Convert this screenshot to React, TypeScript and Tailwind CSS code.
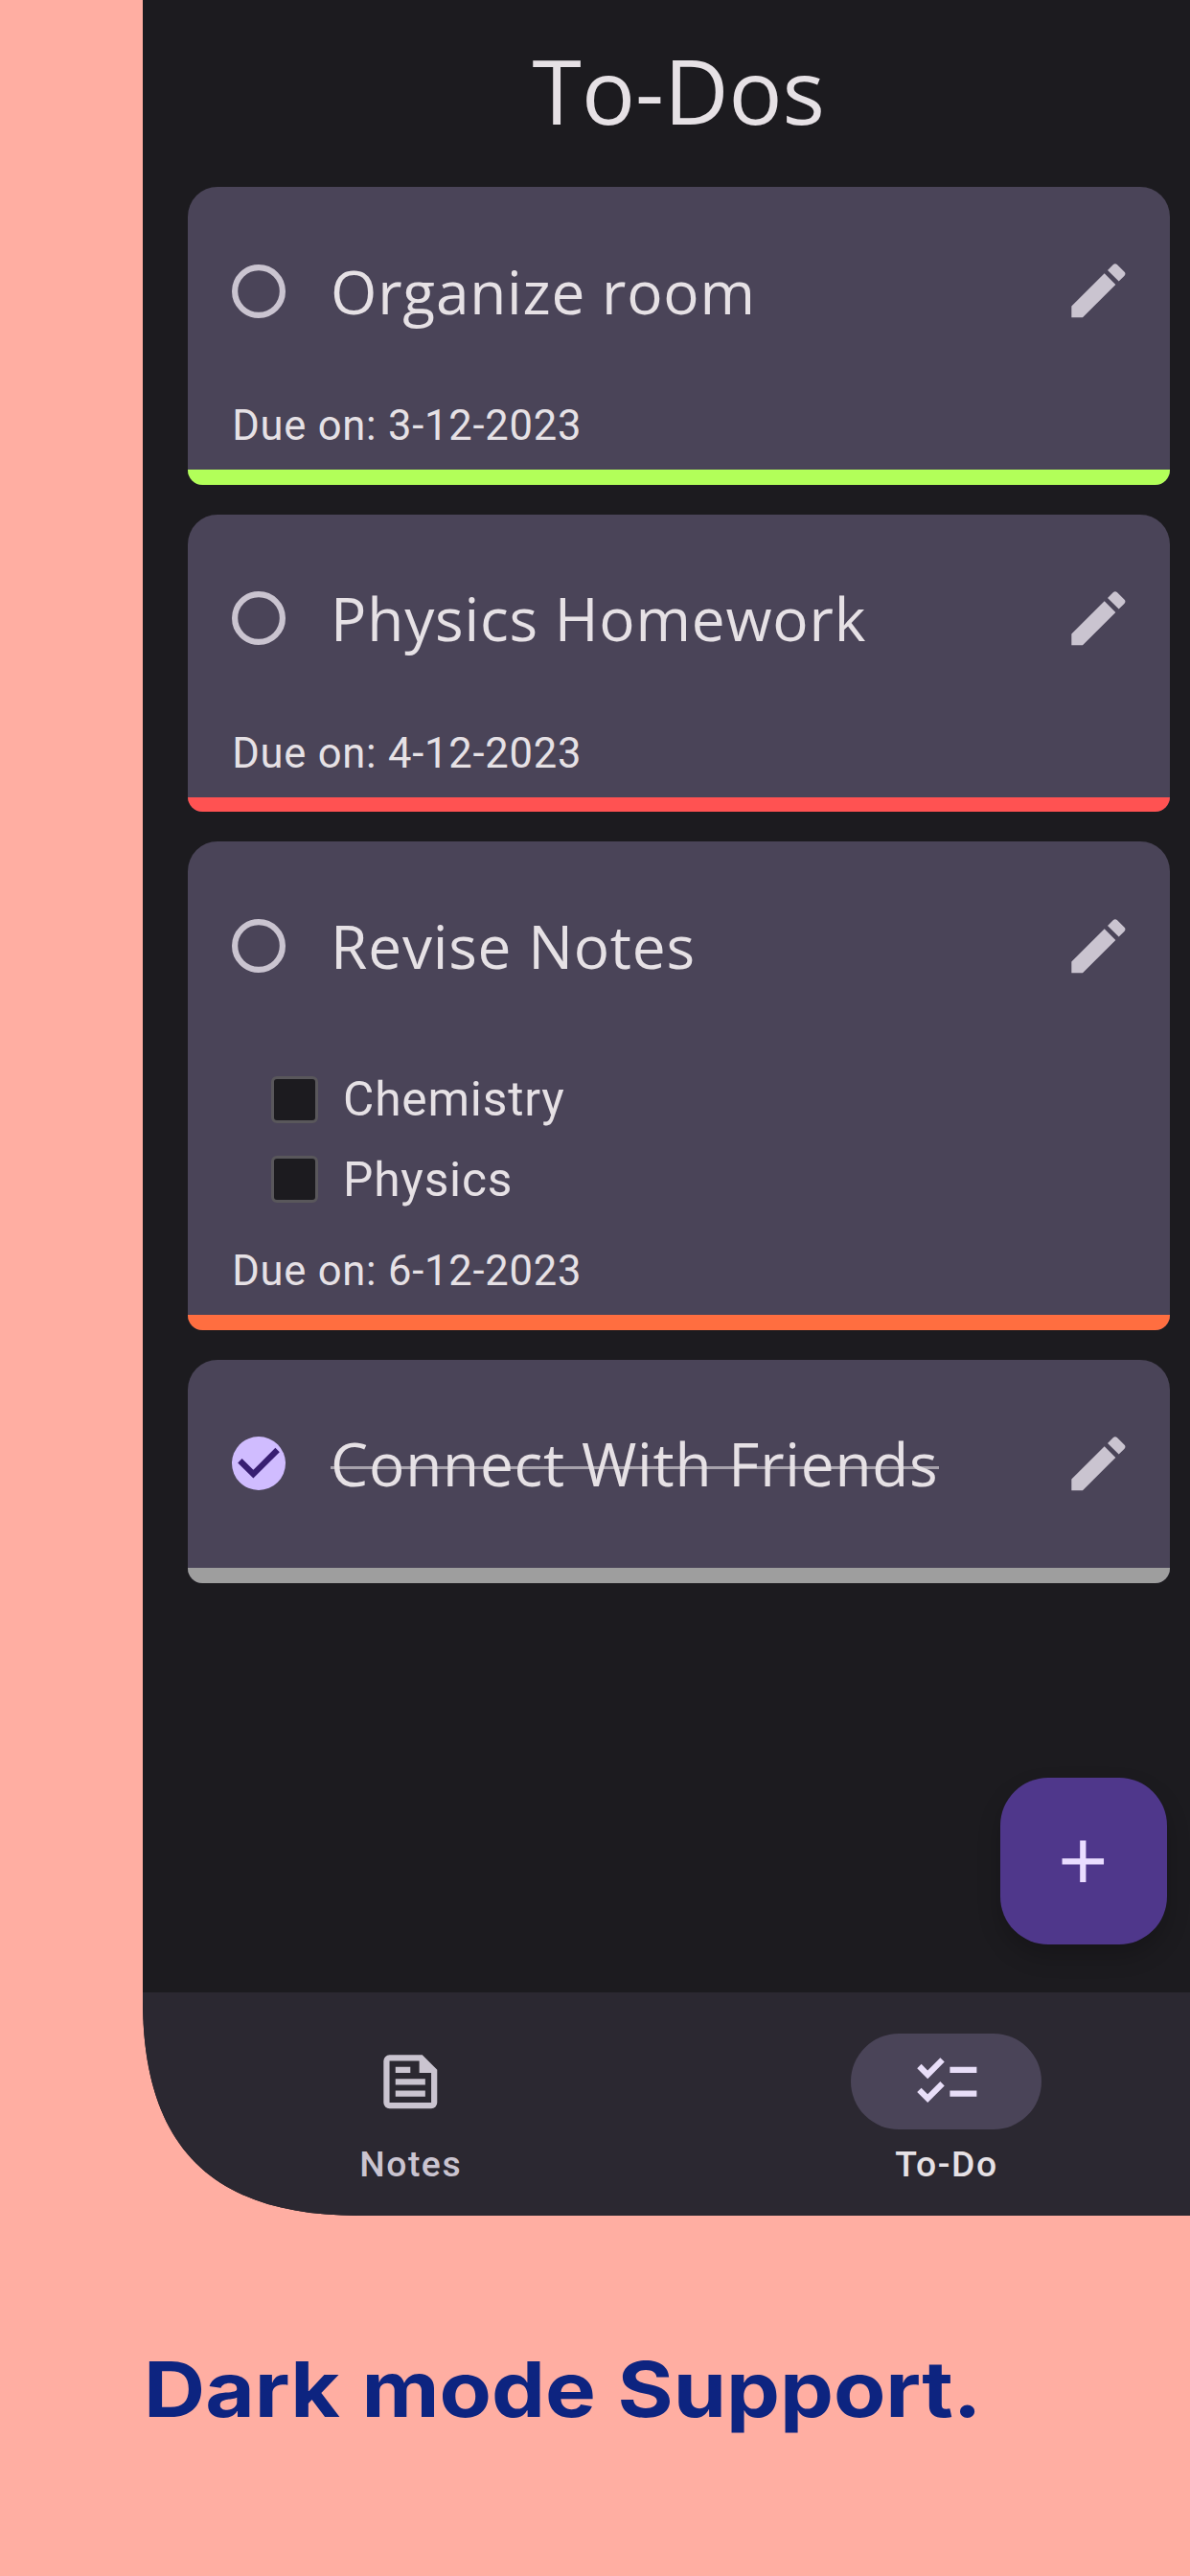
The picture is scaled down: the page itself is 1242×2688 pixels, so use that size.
type Todo = {
  title: string;
  due?: string;
  done?: boolean;
  items?: string[];
  height: string;
  accent: string;
};

const todos: Todo[] = [
  { title: 'Organize room', due: '3-12-2023', height: 'h-[310.7px]', accent: 'bg-[#B2FF59]' },
  { title: 'Physics Homework', due: '4-12-2023', height: 'h-[310.7px]', accent: 'bg-[#FF5252]' },
  { title: 'Revise Notes', due: '6-12-2023', items: ['Chemistry', 'Physics'], height: 'h-[509.5px]', accent: 'bg-[#FF6E40]' },
  { title: 'Connect With Friends', done: true, height: 'h-[233px]', accent: 'bg-[#9E9E9E]' },
];

function CheckCircle({ done }: { done?: boolean }) {
  return (
    <svg className="size-14 shrink-0" viewBox="0 0 18 18" fill="none" strokeWidth="2">
      {done ? (
        <>
          <circle cx="9" cy="9" r="9" fill="#D0BCFF" />
          <path d="M2.7 8.1 7.2 12.6 15.3 4.5" stroke="#381E72" />
        </>
      ) : (
        <circle cx="9" cy="9" r="8" stroke="#CAC4D0" />
      )}
    </svg>
  );
}

function EditIcon() {
  return (
    <svg className="size-[74.6px] shrink-0" viewBox="0 0 24 24" fill="#CAC4D0">
      <path d="M3 17.25V21h3.75L17.81 9.94l-3.75-3.75L3 17.25zM20.71 7.04a.996.996 0 0 0 0-1.41l-2.34-2.34a.996.996 0 0 0-1.41 0l-1.83 1.83 3.75 3.75 1.83-1.83z" />
    </svg>
  );
}

function TodoCard({ todo }: { todo: Todo }) {
  return (
    <article className={`flex flex-col overflow-hidden rounded-t-[31px] rounded-b-[15.5px] bg-[#4A4458] ${todo.height}`}>
      <div className="flex h-[217.2px] shrink-0 items-center pr-[37.5px] pl-[46.5px]">
        <CheckCircle done={todo.done} />
        <h2 className="relative ml-[47px] font-['Open_Sans',sans-serif] text-[62.14px] leading-[84px] tracking-[0.78px] whitespace-nowrap">
          {todo.title}
          {todo.done && <span className="absolute top-[45px] left-0 h-[3px] w-full bg-[#E6E1E5]/60" />}
        </h2>
        <div className="ml-auto flex">
          <EditIcon />
        </div>
      </div>
      {todo.items && (
        <ul className="flex shrink-0 flex-col pt-[9.6px] pl-[87.5px]">
          {todo.items.map((item) => (
            <li key={item} className="flex h-[83.7px] items-center text-[49.7px] leading-[60px] tracking-[0.78px]">
              <span className="mr-[26px] size-[49px] rounded-[6px] border-[3px] border-[#59575B] bg-[#1C1B1F]" />
              {item}
            </li>
          ))}
        </ul>
      )}
      {todo.due && (
        <p className="mt-auto mb-[14px] shrink-0 pl-[46.6px] text-[43.5px] leading-[62px] tracking-[0.78px]">
          Due on: {todo.due}
        </p>
      )}
      <div className={`h-[15.5px] shrink-0 ${todo.due ? '' : 'mt-auto'} ${todo.accent}`} />
    </article>
  );
}

export default function App() {
  return (
    <div className="flex h-[2688px] w-[1242px] flex-col overflow-hidden bg-[#FFAEA2]">
      <main className="ml-[149px] flex h-[2312px] w-[1118.6px] shrink-0 flex-col bg-[#1C1B1F] font-[Roboto,sans-serif] text-[#E6E1E5] [clip-path:path('M0_0H1119V2312H225C72_2312_0_2240_0_2087Z')]">
        <h1 className="flex h-[195px] shrink-0 items-center justify-center pb-[7px] font-['Open_Sans',sans-serif] text-[93.2px] leading-[126px]">
          To-Dos
        </h1>
        <section className="flex flex-col gap-[31px] px-[46.6px]">
          {todos.map((todo) => (
            <TodoCard key={todo.title} todo={todo} />
          ))}
        </section>
        <button className="mt-auto mr-[50px] mb-[50px] ml-auto flex size-[174px] shrink-0 items-center justify-center rounded-[50px] bg-[#4F378B] shadow-[0_12px_24px_rgba(0,0,0,0.2)]">
          <svg className="size-[74.6px]" viewBox="0 0 24 24" fill="#EADDFF">
            <path d="M19 13h-6v6h-2v-6H5v-2h6V5h2v6h6v2z" />
          </svg>
        </button>
        <nav className="flex h-[233px] shrink-0 bg-[#2B2831] pt-[43.3px] text-[37.3px] leading-[50px] font-medium tracking-[1.55px]">
          <div className="flex flex-1 flex-col items-center text-[#CAC4D0]">
            <span className="mb-[11.5px] flex h-[99.4px] w-[199px] items-center justify-center">
              <svg className="size-[74.6px]" viewBox="0 0 24 24" fill="#CAC4D0" fillRule="evenodd">
                <path d="M16 3H5a2 2 0 0 0-2 2v14a2 2 0 0 0 2 2h14a2 2 0 0 0 2-2V8zM5 5h10v4h4v10H5z" />
                <path d="M7 7h5v2H7zM7 11h10v2H7zM7 15h10v2H7z" />
              </svg>
            </span>
            Notes
          </div>
          <div className="flex flex-1 flex-col items-center">
            <span className="mb-[11.5px] flex h-[99.4px] w-[199px] items-center justify-center rounded-full bg-[#4A4458]">
              <svg className="size-[74.6px]" viewBox="0 0 24 24" fill="#E8DEF8">
                <path d="M22 7h-9v2h9V7zm0 8h-9v2h9v-2zM5.54 11 2 7.46l1.41-1.41 2.12 2.12 4.24-4.24 1.41 1.41L5.54 11zm0 8L2 15.46l1.41-1.41 2.12 2.12 4.24-4.24 1.41 1.41L5.54 19z" />
              </svg>
            </span>
            To-Do
          </div>
        </nav>
      </main>
      <p className="mt-[131px] ml-[150px] origin-left scale-x-[1.11] self-start font-[Inter,sans-serif] text-[80px] leading-[100px] font-bold whitespace-nowrap text-[#0D2480] [word-spacing:1.5px]">
        Dark mode Support.
      </p>
    </div>
  );
}
